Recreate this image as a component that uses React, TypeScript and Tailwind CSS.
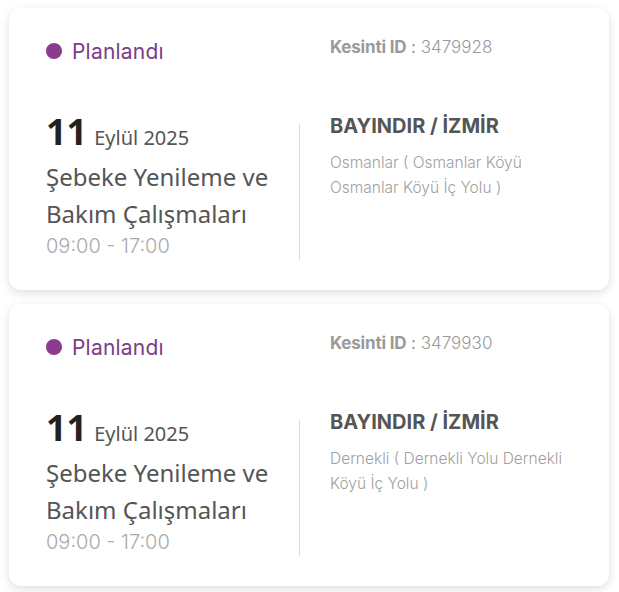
import React from 'react'

type Outage = {
  id: string
  day: string
  monthYear: string
  title: string
  time: string
  district: string
  address: string
}

const outages: Outage[] = [
  {
    id: '3479928',
    day: '11',
    monthYear: 'Eylül 2025',
    title: 'Şebeke Yenileme ve Bakım Çalışmaları',
    time: '09:00 - 17:00',
    district: 'BAYINDIR / İZMİR',
    address: 'Osmanlar ( Osmanlar Köyü Osmanlar Köyü İç Yolu )',
  },
  {
    id: '3479930',
    day: '11',
    monthYear: 'Eylül 2025',
    title: 'Şebeke Yenileme ve Bakım Çalışmaları',
    time: '09:00 - 17:00',
    district: 'BAYINDIR / İZMİR',
    address: 'Dernekli ( Dernekli Yolu Dernekli Köyü İç Yolu )',
  },
]

// geometrik yazı tipi yerine Inter, başlıklar için Noto Sans
const geo = { fontFamily: 'Inter, Lato, sans-serif' }
const human = { fontFamily: '"Noto Sans", "Open Sans", sans-serif' }

function OutageCard({ outage }: { outage: Outage }) {
  return (
    <div className="rounded-[12px] bg-white px-[37px] pt-[25px] pb-[30px] shadow-[0_3px_10px_rgba(0,0,0,0.13)]">
      {/* Üst satır: durum + kesinti id */}
      <div className="flex items-center h-[36px]">
        <div className="w-[284px] flex items-center gap-[10px]" style={geo}>
          <span className="w-[16px] h-[16px] rounded-full bg-[#8a3d8e]" />
          <span className="text-[21px] text-[#7a3d86] leading-none tracking-[0.2px]">Planlandı</span>
        </div>
        <div className="text-[17px] text-[#9a9a9a] -mt-[6px]" style={geo}>
          <span className="font-bold tracking-[-0.2px]">Kesinti ID</span> : <span className="font-light">{outage.id}</span>
        </div>
      </div>

      <div className="flex mt-[43px]">
        {/* Tarih ve başlık */}
        <div className="w-[253px]" style={human}>
          <div className="flex items-baseline gap-[7px] leading-[40px]">
            <span className="text-[36px] font-bold text-[#222]">{outage.day}</span>
            <span className="text-[20px] text-[#555]">{outage.monthYear}</span>
          </div>
          <div className="text-[24px] leading-[37px] text-[#555]">{outage.title}</div>
          <div className="text-[20px] leading-[28px] text-[#aaa] font-light" style={geo}>{outage.time}</div>
        </div>

        <div className="w-px bg-[#dcdcdc] mt-[12px]" />

        {/* Konum */}
        <div className="flex-1 pl-[30px] -mr-[10px]" style={geo}>
          <div className="text-[20px] font-bold text-[#555] leading-[28px]">{outage.district}</div>
          <div className="mt-[10px] text-[15.5px] leading-[25px] text-[#a0a0a0] font-light">{outage.address}</div>
        </div>
      </div>
    </div>
  )
}

export default function App() {
  return (
    <div className="min-h-screen bg-white pl-[9px] pr-[10px] pt-[8px] flex flex-col gap-[14px]">
      {outages.map((o) => (
        <OutageCard key={o.id} outage={o} />
      ))}
    </div>
  )
}
